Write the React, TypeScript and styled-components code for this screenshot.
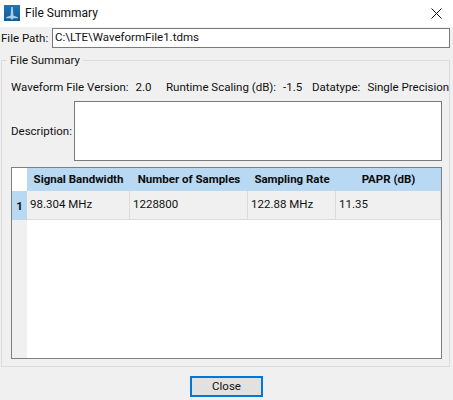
import React from "react";
import styled, { createGlobalStyle } from "styled-components";

const Global = createGlobalStyle`
  html, body { margin: 0; padding: 0; background: #f0f0f0; }
  body { font-family: Roboto, "Open Sans", "Liberation Sans", sans-serif; font-size: 11.5px; color: #111; }
`;
const Window = styled.div`
  width: 453px; height: 400px; display: flex; flex-direction: column; overflow: hidden; background: #f0f0f0;
`;
const TitleBar = styled.div`
  height: 27px; background: #fff; display: flex; align-items: center; padding: 0 11px 1px 4px; box-sizing: border-box;
`;
const AppIcon = styled.svg` width: 16px; height: 16px; flex: none; `;
const Title = styled.div` margin-left: 5px; flex: 1; font-size: 12px; `;
const CloseIcon = styled.svg` width: 11px; height: 11px; flex: none; `;
const PathRow = styled.div`
  display: flex; align-items: center; height: 20px; margin-top: 1px; padding: 0 3px 0 1px;
`;
const PathLabel = styled.label` width: 51px; flex: none; `;
const PathInput = styled.div`
  flex: 1; height: 20px; box-sizing: border-box; background: #fff; border: 1px solid #7a7a7a; padding-left: 2px; line-height: 17px;
`;
const Group = styled.div`
  margin: 12px 3px 0 1px; height: 307px; box-sizing: border-box; border: 1px solid #dcdcdc; position: relative; display: flex; flex-direction: column;
`;
const Legend = styled.div`
  position: absolute; top: -8px; left: 5px; padding: 0 3px; background: #f0f0f0; line-height: 15px;
`;
const InfoRow = styled.div`
  display: flex; height: 16px; margin: 18px 0 0 9px; line-height: 16px; white-space: nowrap;
`;
const Info = styled.span<{ $w: number }>` width: ${p => p.$w}px; flex: none; `;
const Value = styled.span` margin-left: 7px; `;
const DescRow = styled.div`
  display: flex; margin: 6px 0 0 9px; height: 59px;
`;
const DescLabel = styled.label` width: 63px; flex: none; line-height: 60px; `;
const DescBox = styled.div`
  width: 368px; height: 60px; box-sizing: border-box; background: #fff; border: 1px solid #7a7a7a;
`;
const Grid = styled.div`
  margin: 7px 0 0 9px; width: 431px; height: 192px; box-sizing: border-box; border: 1px solid #7f7f7f; background: #fff; display: grid;
  grid-template-columns: 15px 103px 118px 88px 105px; grid-template-rows: 23px 29px 1fr;
`;
const Corner = styled.div` background: #fff; `;
const HeadCell = styled.div`
  background: #b9d9f3; font-weight: 700; display: flex; align-items: center; justify-content: center; white-space: nowrap; padding-bottom: 1px; box-sizing: border-box; color: #0c0c0c;
`;
const RowHead = styled.div`
  background: #b9d9f3; font-weight: 700; display: flex; align-items: center; justify-content: center;
`;
const Cell = styled.div`
  background: #f0f0f0; border-right: 1px solid #dcdcdc; border-bottom: 1px solid #dcdcdc; display: flex; align-items: center; padding: 0 0 2px 3px; box-sizing: border-box; white-space: nowrap;
`;
const Gutter = styled.div` background: #f0f0f0; `;
const Empty = styled.div` grid-column: 2 / -1; background: #fff; `;
const Footer = styled.div` display: flex; justify-content: center; margin-top: 9px; `;
const CloseButton = styled.button`
  width: 73px; height: 21px; box-sizing: border-box; border: 2px solid #0078d7; background: #e1e1e1; font: inherit; color: #111; padding: 0 0 1px;
`;

export default function App() {
  return (
    <Window>
      <Global />
      <TitleBar>
        <AppIcon viewBox="0 0 16 16">
          <defs>
            <linearGradient id="ic" x1="0" y1="0" x2="0" y2="1">
              <stop offset="0" stopColor="#1f74b4" />
              <stop offset="1" stopColor="#15598f" />
            </linearGradient>
          </defs>
          <rect width="16" height="16" fill="url(#ic)" />
          <path d="M7.2 2h1.6l.6 8.4 4.6 1.8v1H9.6L8 15l-1.6-1.8H2v-1l4.6-1.8z" fill="#a9cce6" />
        </AppIcon>
        <Title>File Summary</Title>
        <CloseIcon viewBox="0 0 11 11">
          <path d="M.5.5l10 10M10.5.5l-10 10" stroke="#111" strokeWidth="1" fill="none" />
        </CloseIcon>
      </TitleBar>
      <PathRow>
        <PathLabel>File Path:</PathLabel>
        <PathInput>C:\LTE\WaveformFile1.tdms</PathInput>
      </PathRow>
      <Group>
        <Legend>File Summary</Legend>
        <InfoRow>
          <Info $w={155}>Waveform File Version:<Value>2.0</Value></Info>
          <Info $w={146}>Runtime Scaling (dB):<Value>-1.5</Value></Info>
          <Info $w={130}>Datatype:<Value>Single Precision</Value></Info>
        </InfoRow>
        <DescRow>
          <DescLabel>Description:</DescLabel>
          <DescBox />
        </DescRow>
        <Grid>
          <Corner />
          <HeadCell>Signal Bandwidth</HeadCell>
          <HeadCell>Number of Samples</HeadCell>
          <HeadCell>Sampling Rate</HeadCell>
          <HeadCell>PAPR (dB)</HeadCell>
          <RowHead>1</RowHead>
          <Cell>98.304 MHz</Cell>
          <Cell>1228800</Cell>
          <Cell>122.88 MHz</Cell>
          <Cell>11.35</Cell>
          <Gutter />
          <Empty />
        </Grid>
      </Group>
      <Footer>
        <CloseButton>Close</CloseButton>
      </Footer>
    </Window>
  );
}
